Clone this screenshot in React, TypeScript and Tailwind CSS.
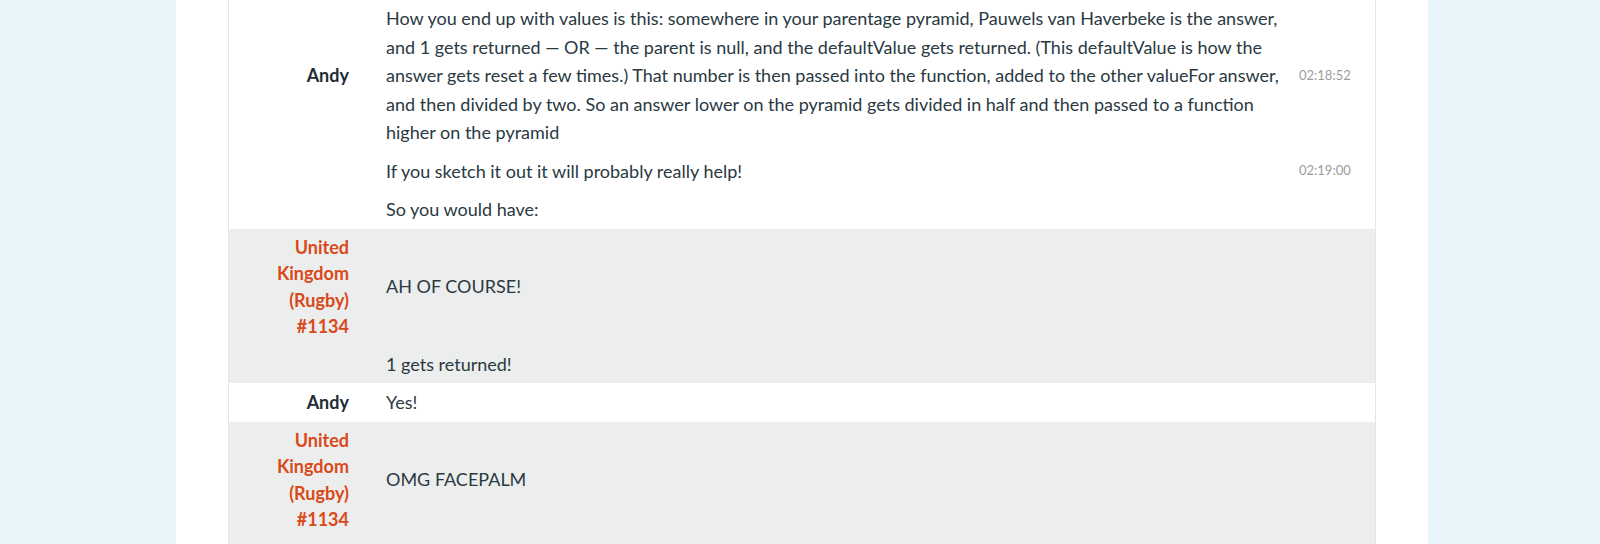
import React from 'react'

type Message = {
  lines: string[]
  time?: string
}

type Group = {
  name: string
  guest: boolean
  messages: Message[]
}

const groups: Group[] = [
  {
    name: 'Andy',
    guest: false,
    messages: [
      {
        lines: [
          'How you end up with values is this: somewhere in your parentage pyramid, Pauwels van Haverbeke is the answer,',
          'and 1 gets returned — OR — the parent is null, and the defaultValue gets returned. (This defaultValue is how the',
          'answer gets reset a few times.) That number is then passed into the function, added to the other valueFor answer,',
          'and then divided by two. So an answer lower on the pyramid gets divided in half and then passed to a function',
          'higher on the pyramid',
        ],
        time: '02:18:52',
      },
      { lines: ['If you sketch it out it will probably really help!'], time: '02:19:00' },
      { lines: ['So you would have:'] },
    ],
  },
  {
    name: 'United Kingdom (Rugby) #1134',
    guest: true,
    messages: [{ lines: ['AH OF COURSE!'] }, { lines: ['1 gets returned!'] }],
  },
  {
    name: 'Andy',
    guest: false,
    messages: [{ lines: ['Yes!'] }],
  },
  {
    name: 'United Kingdom (Rugby) #1134',
    guest: true,
    messages: [{ lines: ['OMG FACEPALM'] }],
  },
]

export default function App() {
  return (
    <div className="flex h-screen overflow-hidden bg-[#e8f5fb] pl-[176px] pr-[172px] font-['Lato',sans-serif]">
      <div className="flex flex-1 flex-col bg-white px-[52px]">
        <div className="-mt-px flex flex-1 flex-col border-x border-[#e4e7e7]">
          {groups.map((group, gi) => (
            <div
              key={gi}
              className={`${group.guest ? 'bg-[#eceeed]' : 'bg-white'} ${gi === groups.length - 1 ? 'grow' : ''}`}
            >
              {group.messages.map((msg, mi) => (
                <div key={mi} className="flex items-center py-[5px]">
                  {/* name only on the first message of a group */}
                  <div
                    className={`w-[140px] shrink-0 pl-[16px] pr-[20px] text-right text-[18px] font-bold leading-[26.5px] ${
                      group.guest ? 'text-[#d9491a]' : 'text-[#1f2c35]'
                    }`}
                  >
                    {mi === 0 ? group.name : ''}
                  </div>
                  <div className="flex-1 pl-[17px] text-[18px] leading-[28.5px] text-[#2a3942]">
                    {msg.lines.map((line, li) => (
                      <div key={li} className="whitespace-nowrap">
                        {line}
                      </div>
                    ))}
                  </div>
                  <div className="w-[76px] shrink-0 pr-[20px] text-[13px] text-[#9c9c9c]">
                    {msg.time}
                  </div>
                </div>
              ))}
            </div>
          ))}
        </div>
      </div>
    </div>
  )
}
